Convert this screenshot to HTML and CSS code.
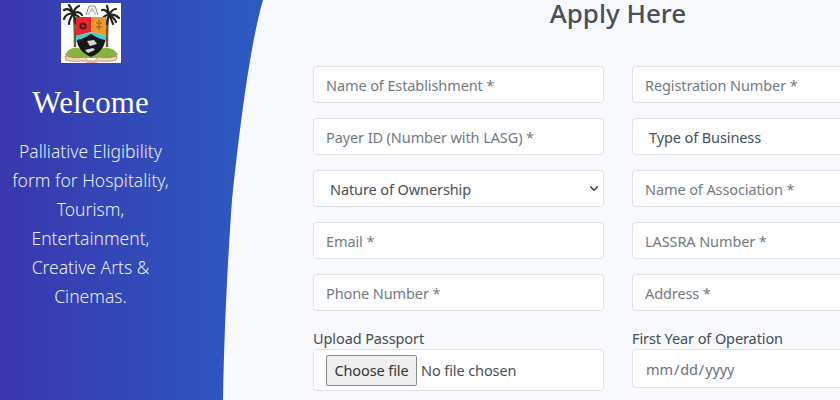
FILE: index.html
```html
<!DOCTYPE html>
<html lang="en">
<head>
<meta charset="UTF-8">
<meta name="viewport" content="width=device-width, initial-scale=1.0">
<title>Apply Here</title>
<link rel="stylesheet" href="styles.css">
</head>
<body>
<div class="page">
<aside class="side">
<svg class="logo" viewBox="0 0 60 60" width="60" height="60" role="img" aria-label="Lagos State coat of arms">
<rect width="60" height="60" fill="#fff"/>
<path d="M25 12 L28 3 H34 L37 12" fill="#f4f4f4" stroke="#8c8c8c" stroke-width="1"/>
<path d="M27 12 L31 5 L35 12 M29 8 H33" fill="none" stroke="#a5a5a5" stroke-width=".8"/>
<path d="M13 14 C14 24 14 34 14 44 M47 14 C46 24 46 34 46 44" fill="none" stroke="#6a5a30" stroke-width="2.4"/>
<g fill="none" stroke="#1e2718" stroke-width="2.2" stroke-linecap="round">
<path d="M12 11 C9 6 6 5 3 7 M12 11 C11 7 10 4 8 2 M12 11 C13 7 15 4 18 3 M12 11 C16 8 19 9 21 12 M12 11 C8 10 4 12 3 16 M12 11 C10 14 8 17 8 21 M12 11 C14 14 15 17 15 21 M12 11 C16 12 19 14 20 18"/>
<path d="M48 12 C46 8 44 6 41 7 M48 12 C47 8 47 6 46 3 M48 12 C50 8 52 6 55 6 M48 12 C52 11 55 12 58 15 M48 12 C45 12 42 14 41 17 M48 12 C47 15 46 18 46 21 M48 12 C50 15 51 18 52 21 M48 12 C52 14 54 16 55 19"/>
</g>
<path d="M4 52 C7 46 12 44 18 45 L30 54 L42 45 C48 44 54 46 57 52 L50 55 H10 Z" fill="#86b43c"/>
<path d="M15 14 H30 V29 L15 33 Z" fill="#e8262b"/>
<path d="M30 14 H45 V33 L30 29 Z" fill="#f0982c"/>
<path d="M15 33 L30 29 L45 33 V39 H15 Z" fill="#45cbd2"/>
<path d="M16 37 C22 36 26 33 30 31 C34 33 38 36 44 37 C44 45 37 51 30 54 C23 51 16 45 16 37 Z" fill="#14181a"/>
<circle cx="22" cy="23" r="3.6" fill="#3d1f1c"/>
<circle cx="22" cy="23" r="1.6" fill="#e8262b"/>
<path d="M35 20 H41 M38 17 V27 M35 24 H41" stroke="#8a5a1a" stroke-width="1"/>
<path d="M26 38 L33 37 L36 41 L29 43 Z M24 47 L32 45 L34 47 L27 50 Z" fill="#d8d8d8"/>
<path d="M4 53 C10 55 18 55 24 54 L27 58 H34 L37 54 C43 55 50 55 56 53 L55 57 C49 59 43 58 37 58 L34 60 H27 L24 58 C18 58 11 59 5 57 Z" fill="#f1d9bc" stroke="#b5573a" stroke-width=".6"/>
</svg>
<h1 class="side-title">Welcome</h1>
<p class="side-text">Palliative Eligibility form for Hospitality, Tourism, Entertainment, Creative Arts &amp; Cinemas.</p>
</aside>
<main class="main">
<h2 class="form-title">Apply Here</h2>
<form class="form-grid">
<input class="field" type="text" placeholder="Name of Establishment *">
<input class="field" type="text" placeholder="Registration Number *">
<input class="field" type="text" placeholder="Payer ID (Number with LASG) *">
<select class="field pick"><option>Type of Business</option></select>
<select class="field pick"><option>Nature of Ownership</option></select>
<input class="field" type="text" placeholder="Name of Association *">
<input class="field" type="email" placeholder="Email *">
<input class="field" type="text" placeholder="LASSRA Number *">
<input class="field" type="text" placeholder="Phone Number *">
<input class="field" type="text" placeholder="Address *">
<div class="group">
<span class="label">Upload Passport</span>
<label class="field file">
<input class="file-input" type="file">
<span class="file-btn">Choose file</span>
<span class="file-name">No file chosen</span>
</label>
</div>
<div class="group">
<label class="label" for="year">First Year of Operation</label>
<input class="field date" id="year" type="date">
</div>
</form>
</main>
</div>
</body>
</html>
```

FILE: styles.css
```css
html, body { margin: 0; height: 100%; overflow: hidden; }
body { font-family: "Noto Sans", "Open Sans", sans-serif; background: #f7f9fc; color: #495057; }
.page { display: flex; height: 400px; overflow: hidden; }
.side { flex: 0 0 265px; box-sizing: border-box; padding: 3px 84px 0 0; background: linear-gradient(to right, #3a36ae, #2b5cc2); color: #fff; text-align: center; clip-path: path("M0 0 H263 C250 45 240 125 232 200 C227 270 224 340 223 400 H0 Z"); }
.logo { display: block; margin: 0 auto; filter: blur(0.3px); }
.side-title { margin: 19px 0 0; font-family: "Liberation Serif", serif; font-size: 31px; font-weight: 400; line-height: 42px; }
.side-text { margin: 13px auto 0; width: 170px; font-size: 17.5px; font-weight: 300; line-height: 29px; color: #e6ecfa; }
.main { flex: 0 0 auto; width: 610px; margin-left: 48px; }
.form-title { margin: 0 0 40px; font-size: 26px; font-weight: 500; line-height: 26px; text-align: center; color: #495057; }
.form-grid { display: grid; grid-template-columns: 291px 291px; column-gap: 28px; row-gap: 15px; align-items: start; }
.field { display: block; box-sizing: border-box; width: 100%; height: 37px; padding: 6px 12px; border: 1px solid #dee2e6; border-radius: 4px; background-color: #fff; font-family: inherit; font-size: 14.5px; letter-spacing: -0.1px; color: #495057; }
.field::placeholder { color: #737b83; opacity: 1; }
.pick { appearance: none; padding-left: 16px; background-image: url("data:image/svg+xml,%3csvg xmlns='http://www.w3.org/2000/svg' viewBox='0 0 16 16'%3e%3cpath fill='none' stroke='%23343a40' stroke-linecap='round' stroke-linejoin='round' stroke-width='2.4' d='M2 5l6 6 6-6'/%3e%3c/svg%3e"); background-repeat: no-repeat; background-position: right 4px center; background-size: 10px 9px; }
.group { margin-top: 1px; }
.label { display: block; font-size: 14.5px; letter-spacing: -0.1px; line-height: 22px; color: #464d54; }
.file { display: flex; align-items: center; gap: 4px; height: 42px; padding: 5px 12px; }
.file-input { display: none; }
.file-btn { box-sizing: border-box; width: 91px; height: 31px; border: 1px solid #8a8a8a; border-radius: 2px; background: #efefef; font-size: 14.5px; line-height: 29px; text-align: center; color: #333; }
.file-name { color: #495057; font-size: 14.5px; }
.date { height: 39px; color: #6a7178; }
```
